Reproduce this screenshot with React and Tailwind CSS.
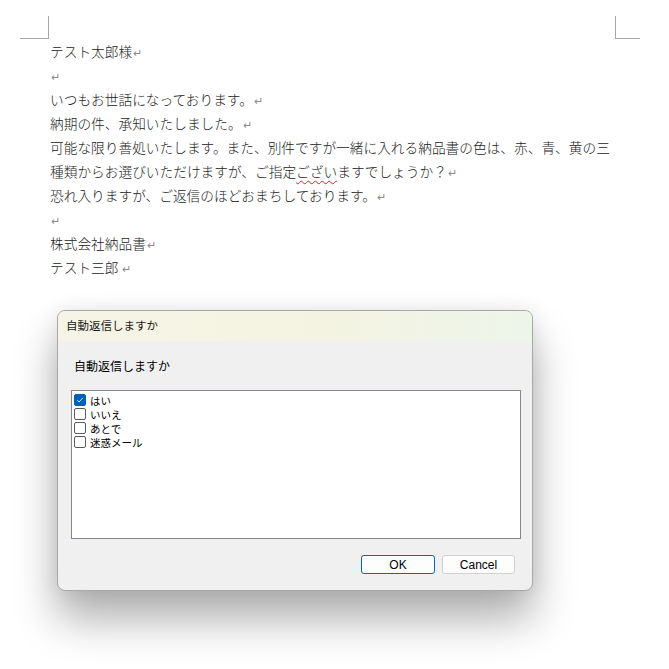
import { useState } from "react";

const docFont = { fontFamily: '"Noto Sans CJK JP", "Liberation Serif", serif' };

function Ret() {
  return <span className="inline-block align-baseline text-[11px] leading-none text-[#8a8a8a] ml-[1px]">↵</span>;
}

function Line({ children, className = "" }) {
  return <div className={`h-[24px] leading-[24px] overflow-visible ${className}`}>{children}</div>;
}

function Check({ checked, onClick }) {
  return (
    <span
      onClick={onClick}
      className={`w-[12px] h-[12px] rounded-[2px] flex items-center justify-center shrink-0 ${
        checked ? "bg-[#005fb8] border border-[#005fb8]" : "bg-white border border-[#5c5c5c]"
      }`}
    >
      {checked && (
        <svg width="8" height="8" viewBox="0 0 8 8">
          <path d="M1.2 4.2 L3.1 6 L6.8 1.8" fill="none" stroke="#cfe3f7" strokeWidth="1" />
        </svg>
      )}
    </span>
  );
}

export default function App() {
  const [items, setItems] = useState([
    { label: "はい", checked: true },
    { label: "いいえ", checked: false },
    { label: "あとで", checked: false },
    { label: "迷惑メール", checked: false },
  ]);

  const toggle = (i) =>
    setItems(items.map((it, j) => (j === i ? { ...it, checked: !it.checked } : it)));

  return (
    <div className="w-[669px] h-[669px] bg-white overflow-hidden">
      {/* corner marks */}
      <div className="flex justify-between pt-[16px] pl-[20px] pr-[29px]">
        <div className="w-[29px] h-[23px] border-r border-b border-[#a6a6a6]" />
        <div className="w-[25px] h-[23px] border-l border-b border-[#a6a6a6]" />
      </div>

      {/* document text */}
      <div className="ml-[50px] text-[13.7px] text-[#222] font-light" style={docFont}>
        <Line>テスト太郎様<Ret /></Line>
        <Line><Ret /></Line>
        <Line>いつもお世話になっております。<Ret /></Line>
        <Line>納期の件、承知いたしました。<Ret /></Line>
        <Line className="whitespace-nowrap">可能な限り善処いたします。また、別件ですが一緒に入れる納品書の色は、赤、青、黄の三</Line>
        <Line>
          種類からお選びいただけますが、ご指定
          <span className="underline decoration-wavy decoration-[#e02020] decoration-1 underline-offset-[3px]">ござい</span>
          ますでしょうか？<Ret />
        </Line>
        <Line>恐れ入りますが、ご返信のほどおまちしております。<Ret /></Line>
        <Line><Ret /></Line>
        <Line>株式会社納品書<Ret /></Line>
        <Line>テスト三郎 <Ret /></Line>
      </div>

      {/* dialog */}
      <div
        className="mt-[31px] ml-[57px] w-[476px] h-[281px] rounded-[8px] border border-[#a8a8a8] bg-[#f0f0f0] overflow-hidden flex flex-col shadow-[0_28px_44px_rgba(0,0,0,0.32),0_0_20px_rgba(0,0,0,0.08)]"
        style={{ fontFamily: '"Noto Sans CJK JP", "Noto Sans", sans-serif' }}
      >
        <div className="h-[30px] shrink-0 flex items-center pl-[8px] text-[11.5px] text-[#1a1a1a] bg-gradient-to-r from-[#f6f4e6] via-[#f5f3e1] to-[#edf5ea]">
          自動返信しますか
        </div>
        <div className="pl-[16px] pt-[17px] text-[12px] text-black leading-[16px]">自動返信しますか</div>
        <div className="mt-[16px] ml-[13px] w-[450px] h-[149px] bg-white border border-[#828790] p-[2px] flex flex-col">
          {items.map((it, i) => (
            <div key={it.label} className="h-[14px] flex items-center gap-[4px] text-[10.5px] leading-[13px] text-black">
              <Check checked={it.checked} onClick={() => toggle(i)} />
              <span className="leading-[13px]">{it.label}</span>
            </div>
          ))}
        </div>
        <div
          className="flex justify-end gap-[7px] pr-[17px] pt-[16px] text-[12px]"
          style={{ fontFamily: '"Liberation Sans", Arial, sans-serif' }}
        >
          <button className="w-[74px] h-[19px] rounded-[3px] border border-[#0067c0] bg-[#fdfdfd] text-black leading-none">
            OK
          </button>
          <button className="w-[73px] h-[19px] rounded-[3px] border border-[#d0d0d0] bg-[#fdfdfd] text-black leading-none">
            Cancel
          </button>
        </div>
      </div>
    </div>
  );
}
